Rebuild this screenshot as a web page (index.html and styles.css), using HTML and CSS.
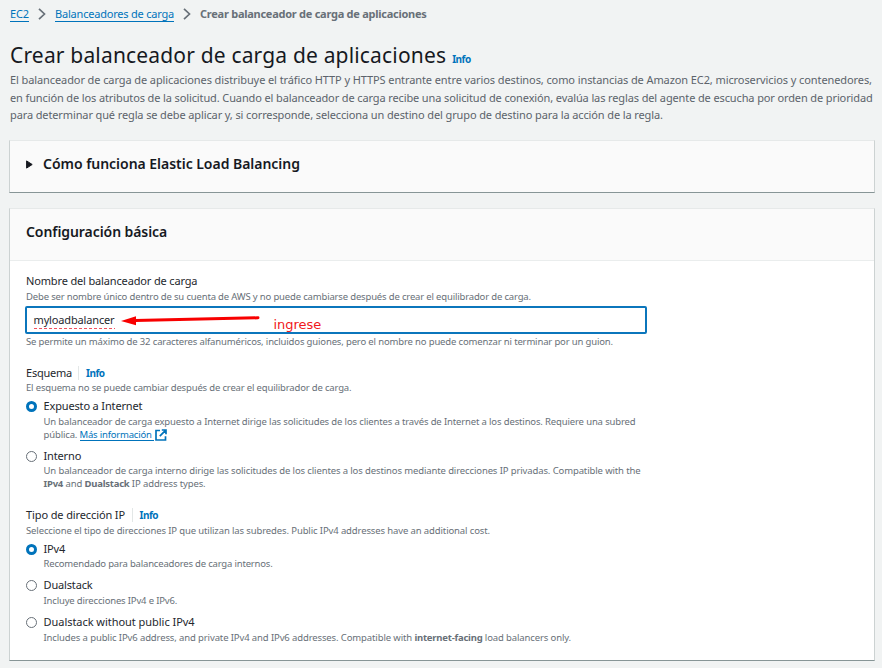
FILE: index.html
```html
<!DOCTYPE html>
<html lang="es">
<head>
<meta charset="utf-8">
<title>Crear balanceador de carga de aplicaciones</title>
<link rel="stylesheet" href="styles.css">
</head>
<body>
<nav class="crumbs">
  <a class="crumb" href="#">EC2</a>
  <svg class="chevron" viewBox="0 0 8 12"><path d="M1 .8 6.5 6 1 11.2"/></svg>
  <a class="crumb crumb-mid" href="#">Balanceadores de carga</a>
  <svg class="chevron" viewBox="0 0 8 12"><path d="M1 .8 6.5 6 1 11.2"/></svg>
  <span class="current">Crear balanceador de carga de aplicaciones</span>
</nav>
<header class="page-head">
  <h1>Crear balanceador de carga de aplicaciones</h1><a class="info">Info</a>
</header>
<p class="intro"><span class="l1">El balanceador de carga de aplicaciones distribuye el tráfico HTTP y HTTPS entrante entre varios destinos, como instancias de Amazon EC2, microservicios y contenedores,</span><br>en función de los atributos de la solicitud. Cuando el balanceador de carga recibe una solicitud de conexión, evalúa las reglas del agente de escucha por orden de prioridad<br>para determinar qué regla se debe aplicar y, si corresponde, selecciona un destino del grupo de destino para la acción de la regla.</p>

<section class="card expander">
  <svg class="caret" viewBox="0 0 7 9"><path d="M.6.9 6.2 4.5 .6 8.1Z"/></svg>
  <h2 class="how">Cómo funciona Elastic Load Balancing</h2>
</section>

<section class="card config">
  <div class="card-head"><h2>Configuración básica</h2></div>
  <div class="card-body">
    <div class="field">
      <div class="label">Nombre del balanceador de carga</div>
      <p class="hint before">Debe ser nombre único dentro de su cuenta de AWS y no puede cambiarse después de crear el equilibrador de carga.</p>
      <div class="input">
        <span class="value">myloadbalancer</span>
        <svg class="arrow" viewBox="0 0 140 12"><path class="shaft" d="M14 6.6 137 3.8"/><path class="tip" d="M0 7 15 2.3V11.3Z"/></svg>
        <span class="note">ingrese</span>
      </div>
      <p class="hint after">Se permite un máximo de 32 caracteres alfanuméricos, incluidos guiones, pero el nombre no puede comenzar ni terminar por un guion.</p>
    </div>

    <div class="field scheme">
      <div class="label"><span class="name esq">Esquema</span><a class="info">Info</a></div>
      <p class="hint">El esquema no se puede cambiar después de crear el equilibrador de carga.</p>
      <div class="option first">
        <i class="radio on"></i>
        <div>
          <div class="label">Expuesto a Internet</div>
          <p class="hint wide">Un balanceador de carga expuesto a Internet dirige las solicitudes de los clientes a través de Internet a los destinos. Requiere una subred<br>pública. <a class="more" href="#">Más información </a><svg class="external" viewBox="0 0 12 12"><path d="M5 1.5H1V11h9.5V7.2M6.8 1H11v4.2M10.8 1.2 4.8 7.2"/></svg></p>
        </div>
      </div>
      <div class="option second">
        <i class="radio"></i>
        <div>
          <div class="label">Interno</div>
          <p class="hint wide inner">Un balanceador de carga interno dirige las solicitudes de los clientes a los destinos mediante direcciones IP privadas. Compatible with the<br><b>IPv4</b> and <b>Dualstack</b> IP address types.</p>
        </div>
      </div>
    </div>

    <div class="field iptype">
      <div class="label"><span class="name ip">Tipo de dirección IP</span><a class="info">Info</a></div>
      <p class="hint inner">Seleccione el tipo de direcciones IP que utilizan las subredes. Public IPv4 addresses have an additional cost.</p>
      <div class="option v4">
        <i class="radio on"></i>
        <div>
          <div class="label">IPv4</div>
          <p class="hint rec">Recomendado para balanceadores de carga internos.</p>
        </div>
      </div>
      <div class="option dual">
        <i class="radio"></i>
        <div>
          <div class="label">Dualstack</div>
          <p class="hint">Incluye direcciones IPv4 e IPv6.</p>
        </div>
      </div>
      <div class="option dual-np">
        <i class="radio"></i>
        <div>
          <div class="label loose">Dualstack without public IPv4</div>
          <p class="hint inner">Includes a public IPv6 address, and private IPv4 and IPv6 addresses. Compatible with <b>internet-facing</b> load balancers only.</p>
        </div>
      </div>
    </div>
  </div>
</section>
</body>
</html>
```
FILE: styles.css
```css
* { box-sizing: border-box; margin: 0; padding: 0; }
body {
  width: 882px; height: 668px; overflow: hidden;
  padding: 6px 7px 0 9px;
  background: #f1f3f3; color: #16191f;
  font-family: "Noto Sans", sans-serif; font-size: 11px; line-height: 16px;
  white-space: nowrap;
}
a { color: #0073bb; text-decoration: none; }

.crumbs { display: flex; height: 16px; padding-left: 1px; }
.crumb { height: 16px; border-bottom: 1px solid #0073bb; letter-spacing: -.1px; }
.crumb-mid { letter-spacing: -.205px; }
.chevron { width: 8px; height: 12px; margin: 2px 9px 0; fill: none; stroke: #687078; stroke-width: 1.7; }
.current { color: #687078; font-weight: 700; letter-spacing: -.26px; }

.page-head { display: flex; align-items: baseline; height: 30px; margin: 18px 0 0 1px; }
h1 { font-size: 21px; line-height: 30px; font-weight: 400; letter-spacing: .17px; }
.info { color: #0073bb; font-size: 10px; font-weight: 700; letter-spacing: -.5px; }
.page-head .info { margin-left: 6px; }
.intro { margin: 1px 0 0 1px; color: #5c636b; line-height: 17.5px; letter-spacing: -.12px; }
.l1 { letter-spacing: -.094px; }

.card {
  width: 866px; background: #fff;
  border: 1px solid #ccd2d2; border-top-color: #e6e9e9; border-bottom-color: #879596;
}
h2 { font-size: 14px; line-height: 20px; font-weight: 600; letter-spacing: -.07px; }
.expander { display: flex; height: 53px; margin-top: 16.5px; padding: 13px 0 0 16px; background: #fafafa; }
.caret { width: 7px; height: 9px; margin: 6px 10px 0 0; fill: #16191f; stroke: #16191f; stroke-linejoin: round; }
.how { letter-spacing: -.03px; }
.config { height: 453px; margin-top: 15px; }
.card-head { height: 52px; padding: 13px 16px; background: #fafafa; border-bottom: 1px solid #eaeded; }
.card-body { padding: 12px 16px 0; }

.label { display: flex; height: 16px; color: #24272d; letter-spacing: -.15px; }
.loose { letter-spacing: -.04px; }
.hint { color: #687078; font-size: 9.5px; line-height: 13px; letter-spacing: -.165px; }
.before { margin-top: 1px; }
.wide { letter-spacing: -.143px; }
.inner { letter-spacing: -.12px; }
.rec { letter-spacing: -.187px; }
.hint b { letter-spacing: -.22px; }

.input {
  display: flex; width: 622px; height: 28px; margin: 3px 0 0 -1px; padding-left: 6.5px;
  border: 2px solid #0b76bc; border-radius: 2px; background: #fff;
}
.value { height: 17px; margin-top: 4px; letter-spacing: -.15px; color: #24272d; background: repeating-linear-gradient(90deg, #f0505f 0 3px, transparent 3px 5px) bottom / 100% 1px no-repeat; }
.arrow { width: 140px; height: 12px; margin: 6px 0 0 6px; }
.shaft { fill: none; stroke: #f80000; stroke-width: 3; stroke-linecap: round; }
.tip { fill: #f80000; }
.note { margin: 8.5px 0 0 13px; color: #f01820; font: 13px/16px "DejaVu Sans", sans-serif; letter-spacing: -.05px; }
.after { margin-top: 1px; letter-spacing: -.15px; }

.scheme { margin-top: 17px; }
.scheme > .label .info, .iptype > .label .info { height: 14px; margin-top: 1px; padding-left: 7px; border-left: 1px solid #e3e7e7; line-height: 14px; }
.esq { width: 52px; letter-spacing: -.23px; }
.ip { width: 105.5px; letter-spacing: -.114px; }

.option { display: flex; }
.radio { flex: none; width: 11px; height: 11px; margin: 3px 6.5px 0 0; border: 1px solid #687078; border-radius: 50%; background: #fff; }
.radio.on { border: 3.5px solid #0073bb; }
.first { margin-top: 4px; }
.first .hint { margin-top: 1px; }
.second { margin-top: 7px; }
.more { display: inline-block; height: 13px; border-bottom: 1px solid #0073bb; letter-spacing: -.2px; white-space: pre; }
.external { width: 12px; height: 12px; margin-left: 1px; vertical-align: -3px; fill: none; stroke: #0073bb; stroke-width: 1.7; }

.iptype { margin-top: 17px; }
.iptype > .hint { margin-top: 1px; }
.v4 { margin-top: 4px; }
.dual { margin-top: 7px; }
.dual .hint, .dual-np .hint { margin-top: 1px; }
.dual-np { margin-top: 7px; }
```
